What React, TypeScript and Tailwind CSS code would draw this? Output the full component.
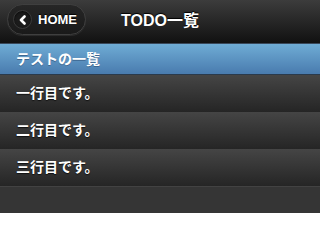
const rows = ["一行目です。", "二行目です。", "三行目です。"];

const font = "font-['Liberation_Sans','Noto_Sans_CJK_JP',sans-serif]";

function BackIcon() {
  return (
    <span className="flex h-[19px] w-[19px] items-center justify-center rounded-full border border-[#3a3a3a] bg-[#1b1b1b] shadow-[inset_0_1px_2px_rgba(0,0,0,0.6)]">
      <svg width="10" height="10" viewBox="0 0 10 10">
        <polyline
          points="6.5,1.5 3,5 6.5,8.5"
          fill="none"
          stroke="#fff"
          strokeWidth="2.6"
          strokeLinecap="round"
          strokeLinejoin="round"
        />
      </svg>
    </span>
  );
}

export default function App() {
  return (
    <div className={`flex h-[213px] w-[320px] flex-col overflow-hidden bg-[#353535] ${font}`}>
      {/* Header */}
      <header className="grid h-[43px] shrink-0 grid-cols-[1fr_auto_1fr] items-start bg-[linear-gradient(#3c3c3c,#111)] pt-[4px]">
        <div className="pl-[7px]">
          <button className="flex h-[31px] w-[79px] items-center gap-[6px] rounded-full border border-[#3f3f3f] bg-[linear-gradient(#262626,#1a1a1a)] pl-[5px] shadow-[0_1px_0_rgba(255,255,255,0.08)]">
            <BackIcon />
            <span className="text-[13px] font-bold text-white [text-shadow:0_-1px_1px_#000]">HOME</span>
          </button>
        </div>
        <h1 className="pt-[7px] text-[16px] font-bold leading-[20px] text-white [text-shadow:0_-1px_1px_#000]">
          TODO一覧
        </h1>
        <div />
      </header>

      {/* Divider */}
      <div className="flex h-[32px] shrink-0 items-center border-y border-t-[#39485a] border-b-[#2a3a4c] bg-[linear-gradient(#6facd5,#497bae)] pl-[16px] text-[14px] font-bold text-white [text-shadow:0_1px_0_#3e6790]">
        テストの一覧
      </div>

      {/* List */}
      <ul className="flex flex-col">
        {rows.map((text) => (
          <li
            key={text}
            className="flex h-[37px] items-center bg-[linear-gradient(#454545,#252525)] pl-[16px] text-[14px] font-bold text-white [text-shadow:0_1px_1px_#111]"
          >
            {text}
          </li>
        ))}
      </ul>
      <div className="h-px bg-[#424242]" />
    </div>
  );
}
